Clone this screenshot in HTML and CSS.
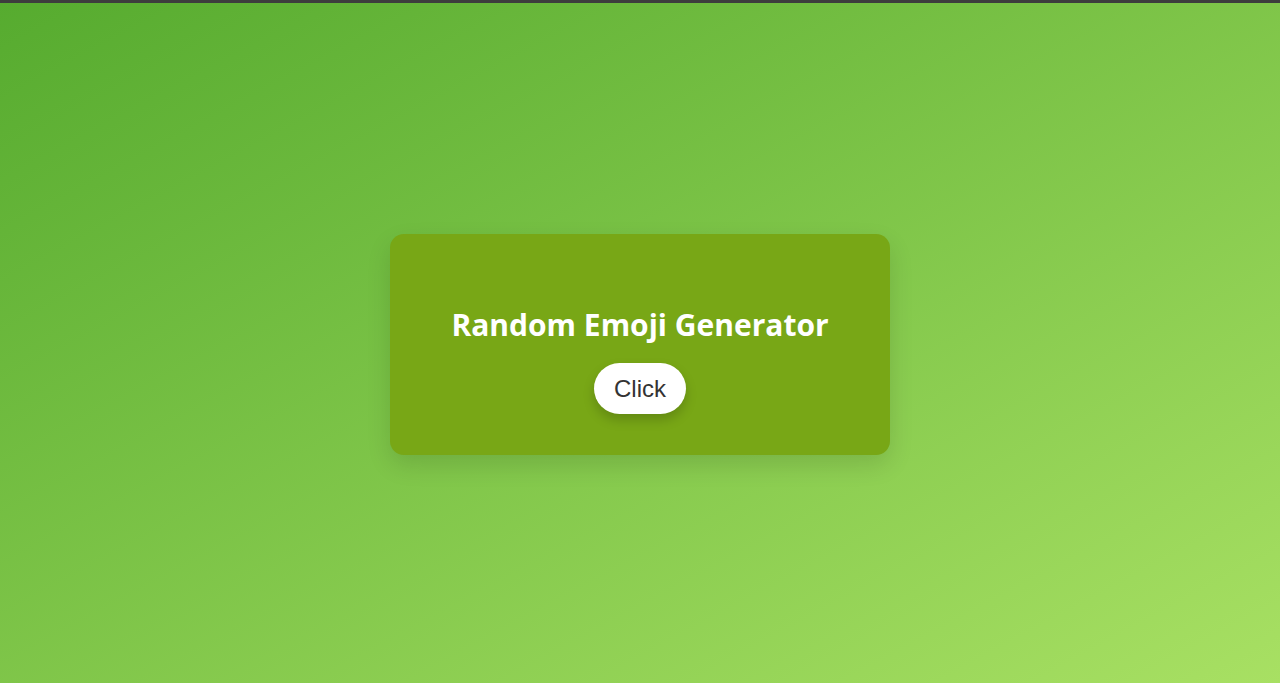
FILE: index.html
```html
<!DOCTYPE html>
<html lang="en">
<head>
<meta charset="utf-8">
<title>Random Emoji Generator</title>
<link rel="stylesheet" href="styles.css">
</head>
<body>
<main class="page">
  <section class="card">
    <h1 class="title">Random Emoji Generator</h1>
    <button class="btn" type="button">Click</button>
  </section>
</main>
</body>
</html>
```
FILE: styles.css
```css
* { box-sizing: border-box; }
html, body { margin: 0; padding: 0; height: 100%; }
body {
  border-top: 3px solid #3d3d3d;
  background: linear-gradient(to right bottom, #56ab2f, #a8e063);
  font-family: "Open Sans", "Noto Sans", sans-serif;
  overflow: hidden;
}
.page {
  height: 680px;
  display: flex;
  align-items: center;
  justify-content: center;
  padding-top: 3px;
}
.card {
  width: 500px;
  height: 221px;
  background: #78a716;
  border-radius: 14px;
  padding: 40px 20px 40px;
  display: flex;
  flex-direction: column;
  align-items: center;
  box-shadow: 0 10px 25px rgba(0, 0, 0, 0.12);
}
.title {
  margin: 29px 0 16px;
  color: #fff;
  font-size: 30px;
  line-height: 44px;
  font-weight: 700;
  letter-spacing: 0;
}
.btn {
  width: 92px;
  height: 51px;
  flex: none;
  border: none;
  border-radius: 26px;
  background: #fff;
  color: #333;
  font-family: "Liberation Sans", Arial, sans-serif;
  font-size: 24px;
  padding: 0;
  box-shadow: 0 6px 12px rgba(0, 0, 0, 0.18);
  cursor: pointer;
}
```
